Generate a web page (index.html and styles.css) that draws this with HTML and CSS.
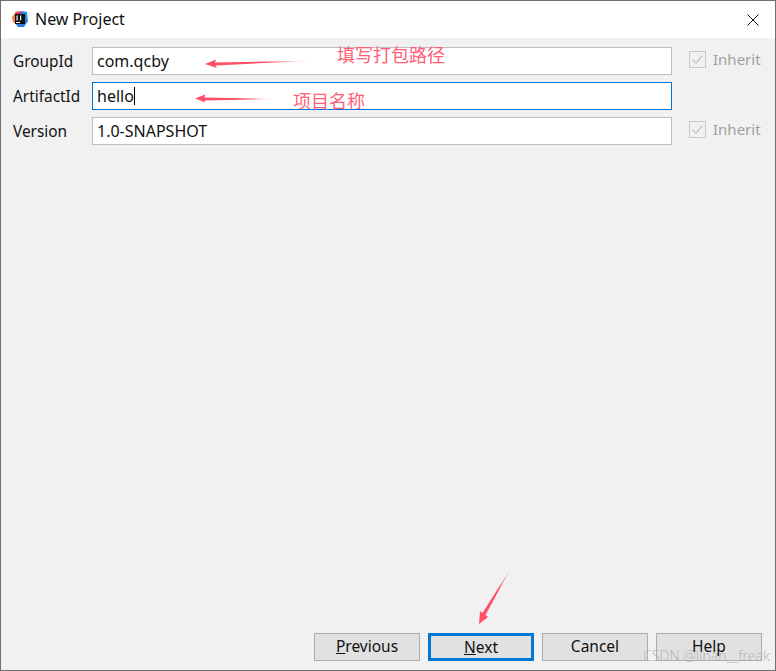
FILE: index.html
```html
<!DOCTYPE html>
<html lang="en">
<head>
<meta charset="utf-8">
<title>New Project</title>
<link rel="stylesheet" href="styles.css">
</head>
<body>
<div class="window">
  <header class="titlebar">
    <svg class="app-icon" width="16" height="16" viewBox="0 0 16 16">
      <path d="M0 6 L4 1 L7 4 L5 14 L1 11Z" fill="#f97a3c"/>
      <path d="M3 1 L10 0 L11 5 L5 6Z" fill="#e8336d"/>
      <path d="M9 0 L15 1 L16 11 L11 8Z" fill="#1f8fe8"/>
      <path d="M3 12 L6 16 H12 L16 10 L10 8Z" fill="#2a7de1"/>
      <rect x="3" y="3" width="10" height="10" fill="#111"/>
      <rect x="4" y="11" width="4" height="1" fill="#fff"/>
      <rect x="4.5" y="4.5" width="1.2" height="5" fill="#fff"/>
      <path d="M8 4.5 H9.2 V8.5 Q9.2 9.6 7.6 9.6 V8.7 Q8 8.7 8 8.2Z" fill="#fff"/>
    </svg>
    <span class="title">New Project</span>
    <svg class="close" width="12" height="12" viewBox="0 0 12 12"><path d="M0.5 0.5 L11.5 11.5 M11.5 0.5 L0.5 11.5" stroke="#111" stroke-width="1" fill="none"/></svg>
  </header>
  <main class="content">
    <form class="form">
      <label class="label">GroupId</label>
      <div class="field">com.qcby</div>
      <div class="inherit"><span class="check"><svg width="13" height="11" viewBox="0 0 13 11"><path d="M1.5 5.5 L5 9 L11.5 1.5" stroke="#c4c4c4" stroke-width="1.2" fill="none"/></svg></span>Inherit</div>
      <label class="label">ArtifactId</label>
      <div class="field focused">hello<span class="caret"></span></div>
      <div></div>
      <label class="label">Version</label>
      <div class="field">1.0-SNAPSHOT</div>
      <div class="inherit"><span class="check"><svg width="13" height="11" viewBox="0 0 13 11"><path d="M1.5 5.5 L5 9 L11.5 1.5" stroke="#c4c4c4" stroke-width="1.2" fill="none"/></svg></span>Inherit</div>
    </form>
    <footer class="buttons">
      <button class="btn" type="button"><u>P</u>revious</button>
      <button class="btn default" type="button"><u>N</u>ext</button>
      <button class="btn" type="button">Cancel</button>
      <button class="btn" type="button">Help</button>
    </footer>
  </main>
  <svg class="arrows" width="776" height="671" viewBox="0 0 776 671">
    <defs>
      <linearGradient id="a1" gradientUnits="userSpaceOnUse" x1="205" y1="0" x2="311" y2="0"><stop offset="0.6" stop-color="#ff5068"/><stop offset="1" stop-color="#ff5068" stop-opacity="0.1"/></linearGradient>
      <linearGradient id="a2" gradientUnits="userSpaceOnUse" x1="195" y1="0" x2="275" y2="0"><stop offset="0.6" stop-color="#ff5068"/><stop offset="1" stop-color="#ff5068" stop-opacity="0.1"/></linearGradient>
      <linearGradient id="a3" gradientUnits="userSpaceOnUse" x1="479" y1="623" x2="511" y2="568"><stop offset="0.6" stop-color="#ff5068"/><stop offset="1" stop-color="#ff5068" stop-opacity="0.1"/></linearGradient>
    </defs>
    <path d="M205 64 L216 59.5 L215 62.5 L311 60.8 L215.5 65.5 L217 68Z" fill="url(#a1)"/>
    <path d="M195 98.5 L205 94.5 L204.5 97.5 L275 99 L204.5 100.5 L205.5 102.5Z" fill="url(#a2)"/>
    <path d="M479 624 L480 611 L482.5 613 L511 568 L485.5 615 L488 617Z" fill="url(#a3)"/>
  </svg>
  <span class="note note-path">填写打包路径</span>
  <span class="note note-name">项目名称</span>
  <span class="watermark">CSDN @linan__freak</span>
</div>
</body>
</html>
```
FILE: styles.css
```css
* { box-sizing: border-box; }
html, body { margin: 0; padding: 0; }
body {
  width: 776px;
  height: 671px;
  overflow: hidden;
  font-family: "Noto Sans", "Noto Sans CJK SC", sans-serif;
  font-size: 15px;
  color: #111;
}
.window {
  position: relative;
  width: 776px;
  height: 671px;
  display: flex;
  flex-direction: column;
  border: 1px solid #707070;
  background: #f1f1f1;
}
.titlebar {
  height: 37px;
  flex: none;
  display: flex;
  align-items: center;
  padding: 0 16px 2px 11px;
  background: #fff;
}
.app-icon { flex: none; }
.title { margin-left: 7px; font-size: 16px; }
.close { margin-left: auto; margin-top: 2px; }
.content {
  flex: 1;
  display: flex;
  flex-direction: column;
  padding: 9px 13px 9px 12px;
}
.form {
  display: grid;
  grid-template-columns: 79px 580px 1fr;
  grid-auto-rows: 28px;
  row-gap: 7px;
  align-items: center;
}
.label { font-size: 15.4px; }
.field {
  height: 28px;
  display: flex;
  align-items: center;
  padding: 0 4px;
  font-size: 16px;
  background: #fff;
  border: 1px solid #bdbdbd;
}
.field.focused { border-color: #0078d7; }
.caret { width: 1px; height: 18px; background: #000; }
.inherit {
  display: flex;
  align-items: center;
  padding: 0 0 4px 17px;
  color: #a0a0a0;
}
.check {
  width: 17px;
  height: 17px;
  margin-right: 7px;
  display: flex;
  align-items: center;
  justify-content: center;
  border: 1px solid #c8c8c8;
}
.buttons {
  margin-top: auto;
  display: flex;
  justify-content: flex-end;
  gap: 8px;
}
.btn {
  width: 106px;
  height: 28px;
  padding: 0 0 2px;
  font: inherit;
  font-size: 15.5px;
  color: #111;
  background: #e1e1e1;
  border: 1px solid #adadad;
}
.btn.default { padding: 0 0 2px; border: 3px solid #0078d7; }
.arrows { position: absolute; left: -1px; top: -1px; pointer-events: none; }
.note {
  position: absolute;
  font-family: "Noto Sans CJK SC", sans-serif;
  font-weight: 400;
  font-size: 18px;
  line-height: 20px;
  color: #ff6078;
}
.note-path { left: 336px; top: 43px; }
.note-name { left: 292px; top: 89px; }
.watermark {
  position: absolute;
  right: 5px;
  bottom: 5px;
  font-size: 14px;
  font-weight: 300;
  color: rgba(170, 170, 170, 0.8);
}
```
